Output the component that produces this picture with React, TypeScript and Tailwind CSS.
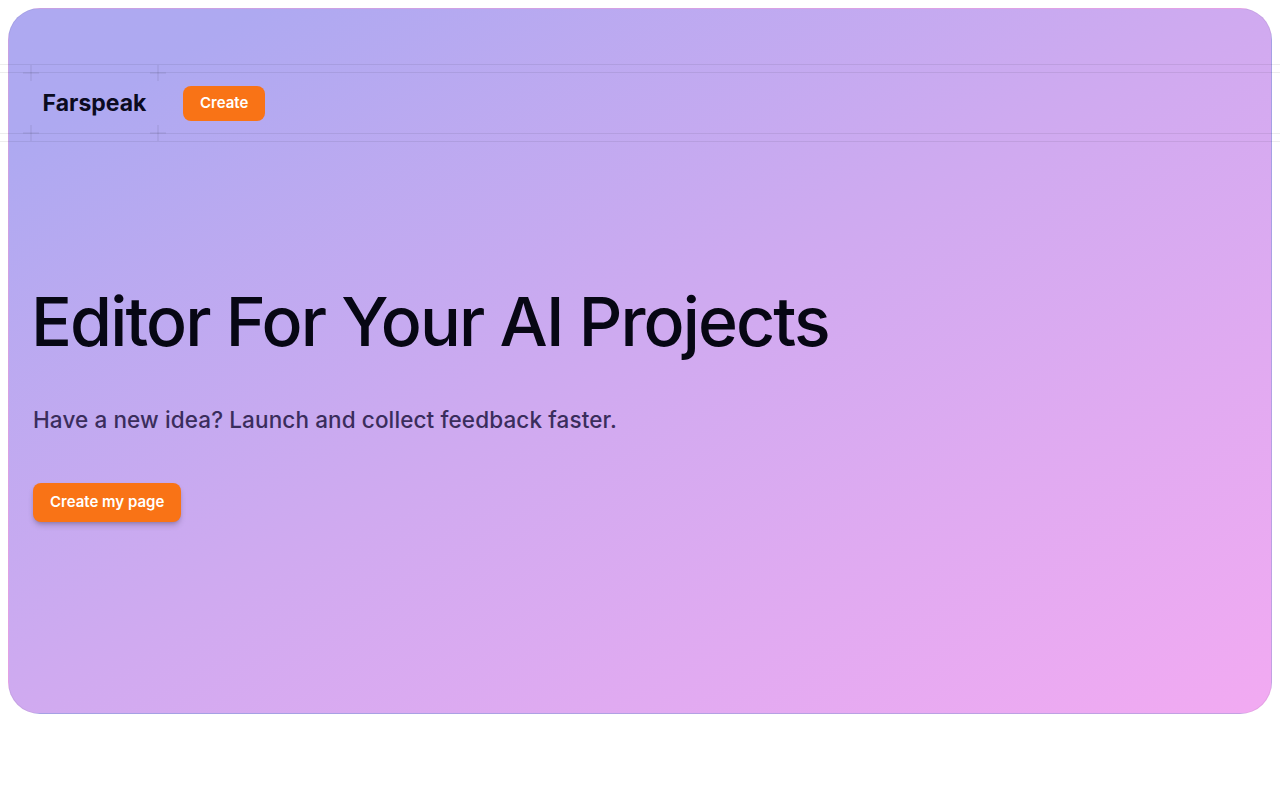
import React from 'react';

function Cross({ className }: { className: string }) {
  return (
    <span className={`pointer-events-none absolute h-4 w-4 ${className}`}>
      <span className="absolute left-1/2 top-0 h-4 w-px -translate-x-1/2 bg-black/10" />
      <span className="absolute left-0 top-1/2 h-px w-4 -translate-y-1/2 bg-black/10" />
    </span>
  );
}

export default function App() {
  return (
    <div className="min-h-screen bg-white p-2 font-['Inter',sans-serif]">
      <div className="flex h-[706px] flex-col rounded-[32px] border border-black/5 bg-gradient-to-br from-[#aea9f1] from-10% via-[#d0aaf0] to-[#f2aaf2]">
        {/* Nav */}
        <div className="-mx-[9px] mt-[55px] border-y border-black/[0.07]">
          <div className="my-[7px] flex h-[62px] items-center border-y border-black/[0.07] pl-[31px]">
            <div className="relative flex h-full w-[127px] items-center justify-center">
              <Cross className="-left-2 -top-2" />
              <Cross className="-right-2 -top-2" />
              <Cross className="-left-2 -bottom-2" />
              <Cross className="-right-2 -bottom-2" />
              <span className="text-[23px] font-bold text-[#0b0b1f]">Farspeak</span>
            </div>
            <button className="ml-[25px] mt-px h-[35px] rounded-lg bg-[#f97316] px-[17px] text-[15px] font-semibold text-white">
              Create
            </button>
          </div>
        </div>

        {/* Hero */}
        <div className="px-6 pt-[145px]">
          <h1 className="-ml-0.5 text-[68px] font-medium leading-none tracking-[-0.028em] text-[#070714]">
            Editor For Your AI Projects
          </h1>
          <p className="mt-[48px] text-[22.5px] font-medium tracking-[0.005em] text-[#3a2d5c]">
            Have a new idea? Launch and collect feedback faster.
          </p>
          <button className="mt-[46px] h-[39px] rounded-lg bg-[#f97316] px-[17px] text-[15px] font-semibold text-white shadow-md shadow-black/20">
            Create my page
          </button>
        </div>
      </div>
    </div>
  );
}
